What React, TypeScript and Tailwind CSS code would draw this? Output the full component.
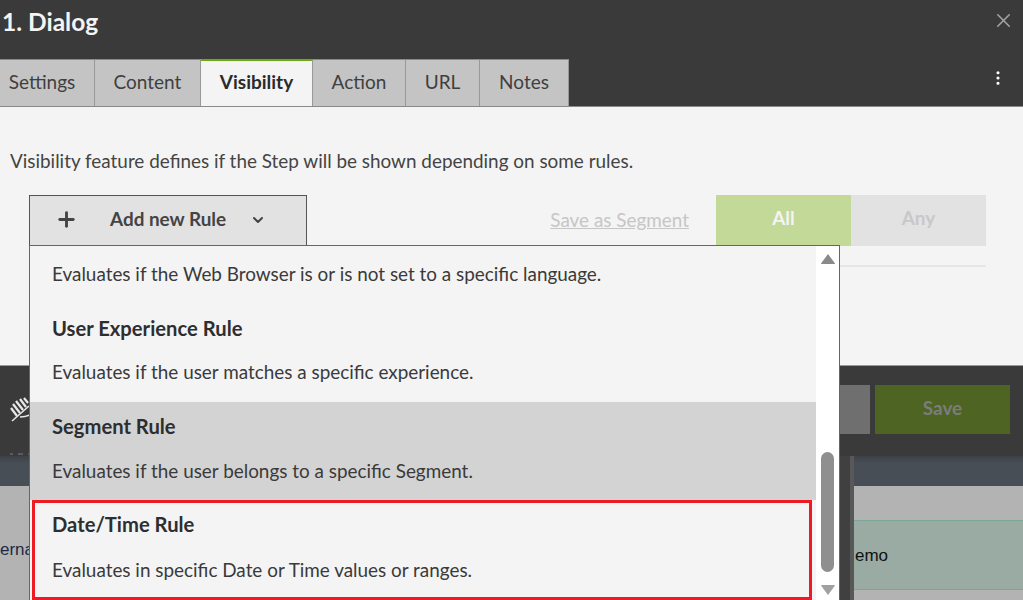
import { X, Plus, ChevronDown, EllipsisVertical } from 'lucide-react';

const tabs = ['Settings', 'Content', 'Visibility', 'Action', 'URL', 'Notes'];
const tabWidths = ['w-[95px]', 'w-[106px]', 'w-[112px]', 'w-[93px]', 'w-[74px]', 'w-[89px]'];

function RuleItem({ name, text, hover, gap }: { name: string; text: string; hover?: boolean; gap: string }) {
  return (
    <div className={`h-[98px] pl-[22px] pt-[11px] ${hover ? 'bg-[#d3d3d3]' : ''}`}>
      <div className="text-[20.2px] leading-[26px] font-bold text-[#2e2e2e]">{name}</div>
      <div className={`${gap} text-[18.9px] leading-[26px] text-[#3a3a3a]`}>{text}</div>
    </div>
  );
}

function RuleMenu() {
  return (
    <div className="absolute left-[29px] top-[245px] flex h-[355px] w-[811px] overflow-hidden border-t border-r border-l border-[#666] bg-[#f4f4f4]">
      <div className="w-[786px] shrink-0">
        <div className="h-[58px] pl-[22px] pt-[15px] text-[18.9px] leading-[26px] text-[#3a3a3a]">
          Evaluates if the Web Browser is or is not set to a specific language.
        </div>
        <RuleItem name="User Experience Rule" text="Evaluates if the user matches a specific experience." gap="mt-[18px]" />
        <RuleItem name="Segment Rule" text="Evaluates if the user belongs to a specific Segment." hover gap="mt-[19px]" />
        <div className="ml-[2px] mr-[4px] h-[100px] border-[3px] border-[#ed1c24] pl-[17px] pt-[8px]">
          <div className="text-[20.2px] leading-[26px] font-bold text-[#2e2e2e]">Date/Time Rule</div>
          <div className="mt-[20px] text-[18.9px] leading-[26px] text-[#3a3a3a]">
            Evaluates in specific Date or Time values or ranges.
          </div>
        </div>
      </div>
      <div className="flex flex-1 flex-col items-center bg-white pt-[7px]">
        <svg width="16" height="12" viewBox="0 0 16 12" className="shrink-0">
          <path d="M8 1 L15 10.5 Q15 11 14 11 L2 11 Q1 11 1 10.5 Z" fill="#8a8a8a" />
        </svg>
        <div className="mt-[187px] h-[120px] w-[13px] shrink-0 rounded-full bg-[#8f8f8f]" />
        <svg width="16" height="12" viewBox="0 0 16 12" className="mt-[12px] shrink-0">
          <path d="M8 11 L15 1.5 Q15 1 14 1 L2 1 Q1 1 1 1.5 Z" fill="#a0a0a0" />
        </svg>
      </div>
    </div>
  );
}

export default function App() {
  return (
    <div className="relative flex h-[600px] w-[1023px] flex-col overflow-hidden font-['Lato','Open_Sans',sans-serif]">
      <header className="flex h-[59px] shrink-0 items-center justify-between bg-[#3a3a3a] pl-[2px] pr-[8px]">
        <h1 className="pb-[16px] text-[24.5px] font-bold leading-[43px] text-[#f4f4f4]">1. Dialog</h1>
        <X size={23} strokeWidth={1.6} className="mb-[18px] text-[#a3a3a3]" />
      </header>

      <nav className="flex h-[48px] shrink-0 items-stretch justify-between border-b border-[#8a8a8a] bg-[#3a3a3a] pr-[16px]">
        <div className="flex">
          {tabs.map((tab, i) => (
            <div
              key={tab}
              className={`${tabWidths[i]} flex items-center justify-center border-r border-[#999] pb-[2px] text-[19px] ${
                tab === 'Visibility'
                  ? 'border-t-2 border-t-[#6aaa12] bg-[#f4f4f4] font-bold text-[#2b2b2b]'
                  : 'border-t border-t-[#8a8a8a] bg-[#c4c4c4] text-[#3f3f3f]'
              } ${tab === 'Settings' ? 'pr-[10px]' : ''}`}
            >
              {tab}
            </div>
          ))}
        </div>
        <EllipsisVertical size={18} strokeWidth={2.2} className="mt-[10px] text-white" />
      </nav>

      <main className="h-[259px] shrink-0 border-b border-[#999] bg-[#f4f4f4] pt-[41px]">
        <p className="pl-[10px] text-[18.9px] leading-[26px] text-[#444]">
          Visibility feature defines if the Step will be shown depending on some rules.
        </p>
        <div className="mt-[21px] flex items-start pl-[29px] pr-[37px]">
          <div className="flex h-[51px] w-[278px] items-center border border-[#555] bg-[#e2e2e2] pb-[2px] pl-[25px] text-[#444]">
            <Plus size={23} strokeWidth={3} />
            <span className="ml-[32px] text-[18.9px] font-bold">Add new Rule</span>
            <ChevronDown size={16} strokeWidth={3} className="ml-[24px]" />
          </div>
          <span className="ml-auto mt-[13px] text-[18.9px] leading-[24px] text-[#c6c6c6] underline">Save as Segment</span>
          <div className="ml-[27px] flex h-[51px] text-[18.9px] font-bold">
            <div className="flex w-[135px] items-center justify-center bg-[#c2d997] pb-[4px] text-[#f4f4f4]">All</div>
            <div className="flex w-[135px] items-center justify-center bg-[#e2e2e2] pb-[4px] text-[#c8c8c8]">Any</div>
          </div>
        </div>
        <div className="ml-[840px] mr-[37px] mt-[19px] h-[2px] bg-[#e6e6e6]" />
      </main>

      <footer className="flex h-[90px] shrink-0 items-start justify-between bg-[#3a3a3a] pl-[10px] pr-[13px] pt-[19px]">
        <div className="mt-[11px] flex flex-col">
          <svg width="20" height="27" viewBox="0 0 20 27" fill="none" stroke="#e8e8e8" strokeWidth="1.6">
            <path d="M2 25 L19 10" />
            <path d="M1 12 L7 20 M3 8 L10 17 M6 5 L13 14 M10 3 L16 11 M14 2 L18 7" strokeWidth="2.2" />
            <path d="M10 21 Q15 21 20 19" />
          </svg>
          <div className="mt-[30px] flex gap-[5px]">
            <div className="h-[2px] w-[3px] bg-[#5c5c5c]" />
            <div className="h-[2px] w-[5px] bg-[#5c5c5c]" />
            <div className="h-[2px] w-[7px] bg-[#5c5c5c]" />
          </div>
        </div>
        <div className="flex gap-[5px]">
          <div className="h-[49px] w-[60px] bg-[#6f6f6f]" />
          <div className="flex h-[49px] w-[135px] items-center justify-center bg-[#4d6423] pb-[2px] text-[18.9px] font-bold text-[#7c7c7c]">
            Save
          </div>
        </div>
      </footer>

      <section className="flex flex-1 font-['Liberation_Sans',sans-serif] text-[17px] text-[#111]">
        <div className="flex w-[840px] shrink-0 flex-col">
          <div className="h-[30px] bg-linear-to-b from-[#3e4247] to-[#474e56] to-25%" />
          <div className="flex-1 bg-[#b3b3b3] pt-[53px] leading-[22px] text-[#1c2a44]">erna</div>
        </div>
        <div className="flex w-[14px] shrink-0">
          <div className="w-[10px] bg-[#404040]" />
          <div className="w-[4px] bg-[#585858]" />
        </div>
        <div className="flex flex-1 flex-col">
          <div className="h-[30px] bg-linear-to-b from-[#3e4247] to-[#474e56] to-25%" />
          <div className="h-[34px] bg-[#b3b3b3]" />
          <div className="flex h-[70px] items-center border-y border-[#7aa898] bg-[#9aaba3] pl-px pt-[2px]">emo</div>
          <div className="flex-1 bg-[#b3b3b3]" />
        </div>
      </section>

      <RuleMenu />
    </div>
  );
}
